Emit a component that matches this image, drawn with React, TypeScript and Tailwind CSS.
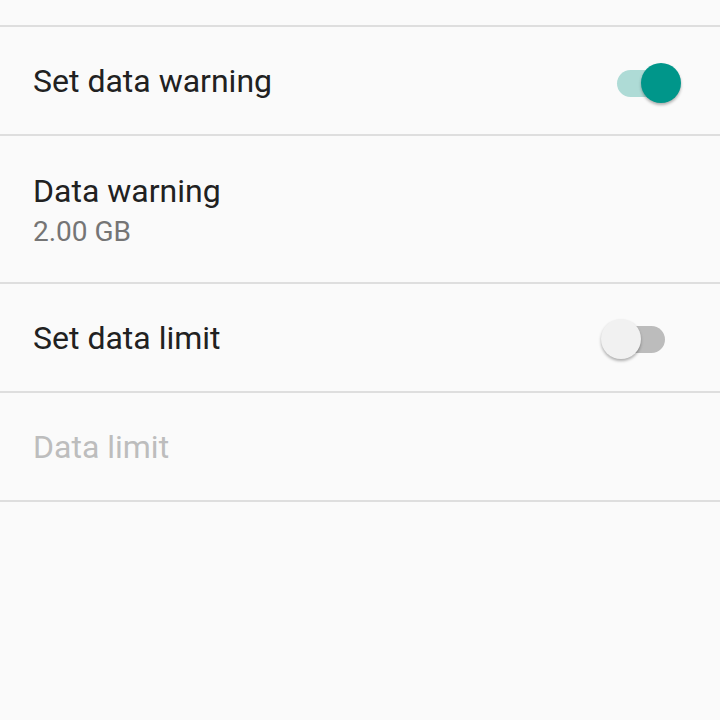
import { useState } from 'react';

// Android-style data usage preference list

function Toggle({ on, className }: { on: boolean; className: string }): JSX.Element {
  return (
    <div className={`relative h-[40px] w-[66px] ${className}`}>
      <div
        className={`absolute left-[2px] top-[7px] h-[27px] w-[62px] rounded-full ${
          on ? 'bg-[#aedbd6]' : 'bg-[#bcbcbc]'
        }`}
      />
      <div
        className={`absolute top-0 h-[40px] w-[40px] rounded-full shadow-[0_2px_3px_rgba(0,0,0,0.3)] ${
          on ? 'left-[26px] bg-[#00968a]' : 'left-0 bg-[#f1f1f1]'
        }`}
      />
    </div>
  );
}

function Divider(): JSX.Element {
  return <div className="h-[2px] bg-[#dedede]" />;
}

export default function App(): JSX.Element {
  const [warn] = useState(true);
  const [limit] = useState(false);

  return (
    <div className="min-h-[720px] w-[720px] bg-[#fafafa] font-['Roboto',sans-serif]">
      <div className="h-[25px]" />
      <Divider />

      <div className="flex h-[107px] items-center justify-between pl-[33px]">
        <span className="text-[32px] text-[#212121]">Set data warning</span>
        <Toggle on={warn} className="mr-[39px] mt-[4px]" />
      </div>
      <Divider />

      <div className="flex h-[146px] flex-col justify-center pl-[33px] pt-[5px]">
        <span className="text-[32px] leading-[40px] text-[#212121]">Data warning</span>
        <span className="mt-[1px] text-[28px] leading-[40px] text-[#757575]">2.00 GB</span>
      </div>
      <Divider />

      <div className="flex h-[107px] items-center justify-between pl-[33px]">
        <span className="text-[32px] text-[#212121]">Set data limit</span>
        <Toggle on={limit} className="mr-[53px] mt-[2px]" />
      </div>
      <Divider />

      <div className="flex h-[107px] items-center pl-[33px]">
        <span className="text-[32px] text-[#bdbdbd]">Data limit</span>
      </div>
      <Divider />
    </div>
  );
}
